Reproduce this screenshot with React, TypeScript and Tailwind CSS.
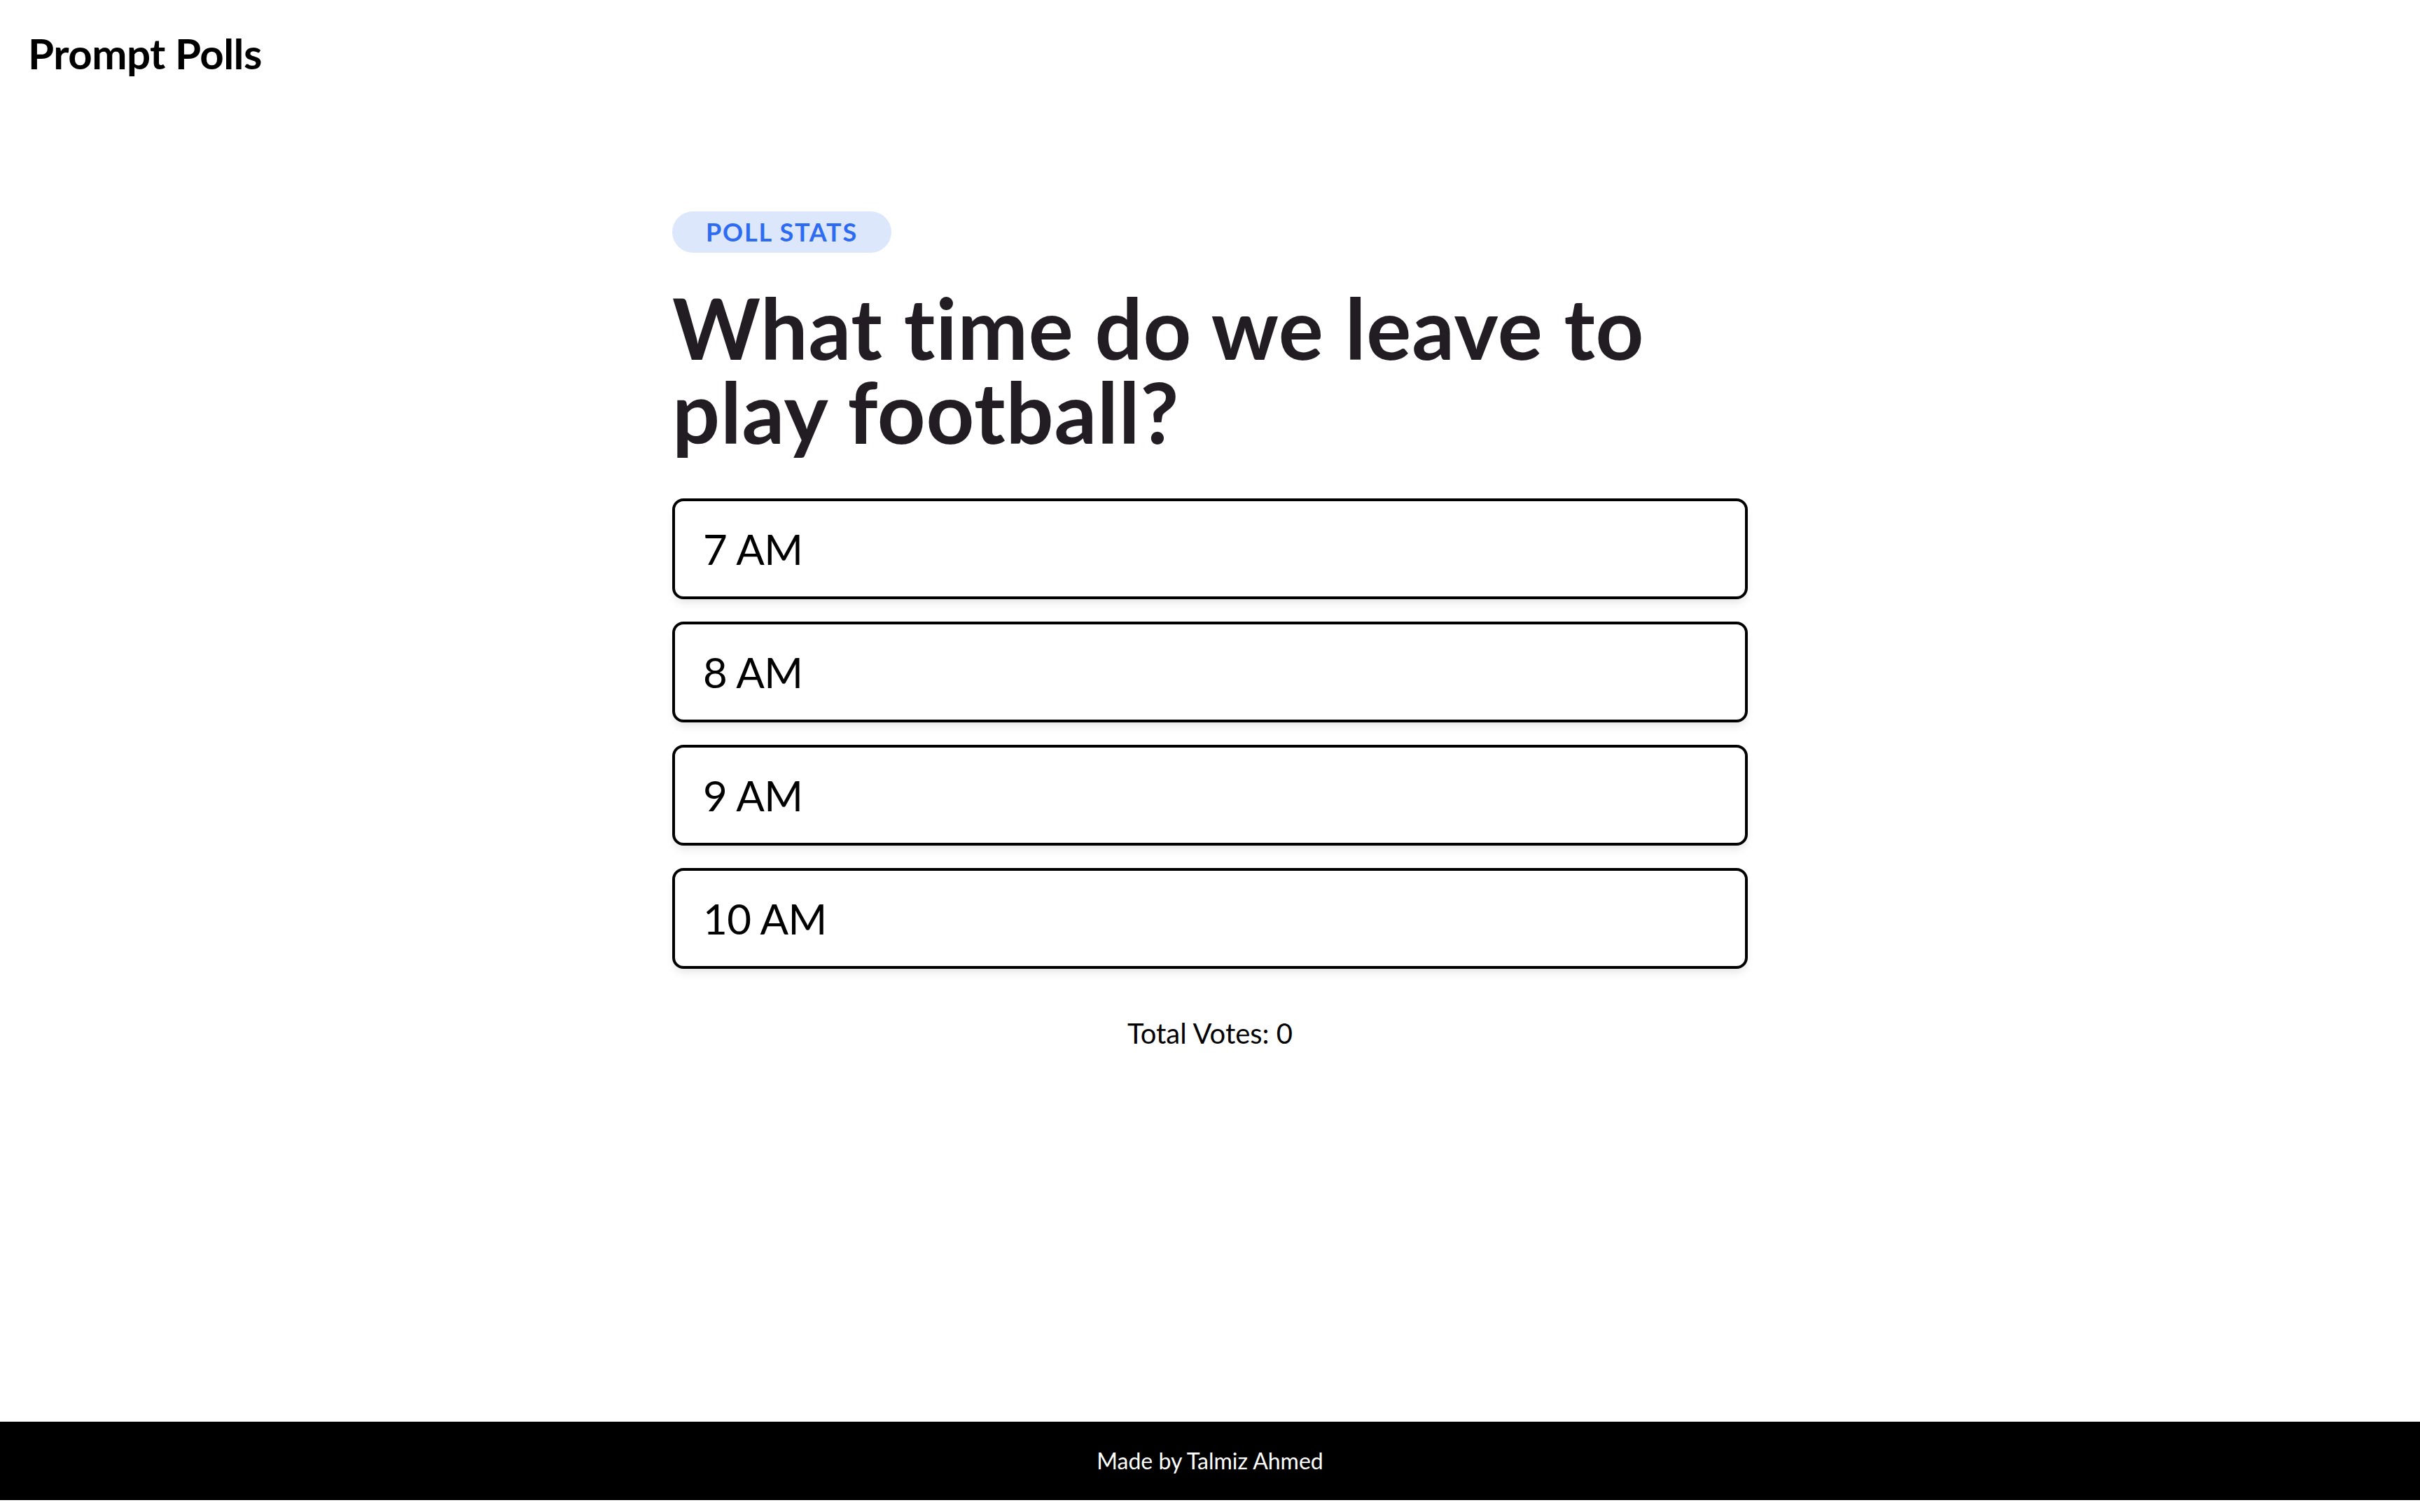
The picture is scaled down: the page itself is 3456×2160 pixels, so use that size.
const options = ["7 AM", "8 AM", "9 AM", "10 AM"];

export default function App() {
  return (
    <div className="min-h-screen flex flex-col bg-white text-black font-['Lato',sans-serif]">
      <header className="px-[40px] py-[40px]">
        <h1 className="text-[60px] leading-[72px] font-bold tracking-[-0.5px]">Prompt Polls</h1>
      </header>

      <main className="flex-1 pt-[150px]">
        <div className="w-[1536px] mx-auto">
          <span className="inline-block rounded-full bg-[#dce7fc] px-[48px] py-[2px] text-[36px] leading-[55px] font-bold tracking-[1.8px] text-[#2c6bf2]">
            POLL STATS
          </span>

          <h2 className="mt-[47px] text-[120px] leading-[120px] font-bold text-[#221d23] tracking-[0.8px]">
            What time do we leave to play football?
          </h2>

          <div className="mt-[64px] flex flex-col gap-[32px]">
            {options.map((opt) => (
              <button
                key={opt}
                className="w-full text-left border-4 border-black rounded-[16px] bg-white px-[40px] py-[32px] text-[60px] leading-[72px] tracking-[-0.5px] shadow-[0_8px_14px_-4px_rgba(0,0,0,0.12)]"
              >
                {opt}
              </button>
            ))}
          </div>

          <p className="mt-[64px] text-center text-[40px] leading-[56px]">Total Votes: 0</p>
        </div>
      </main>

      <footer className="mb-[17px] bg-black py-[32px] text-center text-[32px] leading-[48px] text-white">
        Made by Talmiz Ahmed
      </footer>
    </div>
  );
}
